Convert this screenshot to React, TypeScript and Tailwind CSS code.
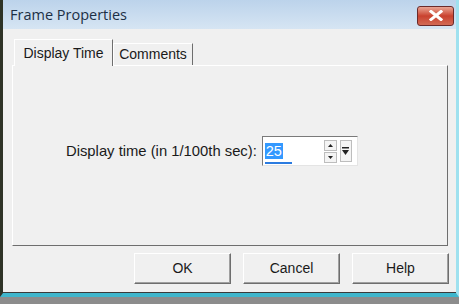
import React from 'react';

const ui = {fontFamily: '"Liberation Sans", Arial, sans-serif'};

function Btn({label}: {label: string}) {
  return (
    <button className="flex h-[31px] w-[97px] items-center justify-center border border-t-white border-l-white border-r-[#6e6e6e] border-b-[#6e6e6e] bg-[#f0f0f0] text-[14px] text-[#1a1a1a] shadow-[inset_-1px_-1px_0_#a0a0a0]">
      {label}
    </button>
  );
}

export default function App() {
  return (
    <div className="flex h-[304px] w-[459px] flex-col overflow-hidden bg-[#8c8c8c]" style={ui}>
      <div className="flex h-[297px] border-l-[3px] border-r-[3px] border-b-[4px] border-l-[#2e3326] border-r-[#9fe1ef] border-b-[#3fb6cc]">
        <div className="flex flex-1 flex-col border-b border-[#3a3a3a]">
          {/* title bar */}
          <div className="flex h-[29px] items-center justify-between bg-gradient-to-b from-[#bcd3eb] to-[#d6e5f3] pl-[7px] pr-[2px]">
            <span className="text-[14.5px] text-[#1c2f45]" style={{fontFamily: '"Open Sans", "Noto Sans", sans-serif'}}>
              Frame Properties
            </span>
            <div className="mt-[2px] flex h-[20px] w-[37px] items-center justify-center rounded-[3px] border border-[#6b2a2a] bg-gradient-to-b from-[#e8a393] via-[#c9412e] to-[#d26a55]">
              <svg width="14" height="11" viewBox="0 0 14 11">
                <path d="M2 1.5 L12 9.5 M12 1.5 L2 9.5" stroke="#fff" strokeWidth="3" strokeLinecap="square" />
              </svg>
            </div>
          </div>
          {/* body */}
          <div className="flex flex-1 flex-col bg-[#f0f0f0] pl-[9px] pr-[6px] pt-[10px]">
            <div className="flex items-end pl-[2px]">
              <div className="z-10 -mb-px flex h-[27px] w-[99px] items-center justify-center border border-b-0 border-t-white border-l-white border-r-[#6e6e6e] bg-[#f0f0f0] text-[14px] text-[#1a1a1a]">
                Display Time
              </div>
              <div className="flex h-[22px] w-[80px] items-center justify-center border border-b-0 border-t-white border-l-white border-r-[#6e6e6e] bg-[#f0f0f0] text-[14px] text-[#1a1a1a]">
                Comments
              </div>
            </div>
            <div className="flex h-[181px] w-[436px] items-center border border-t-white border-l-white border-r-[#6e6e6e] border-b-[#6e6e6e] pb-[9px] pl-[53px]">
              <span className="text-[14.8px] text-[#1a1a1a]">Display time (in 1/100th sec):</span>
              <div className="ml-[5px] flex h-[30px] w-[96px] items-center border border-t-[#7a7a7a] border-l-[#7a7a7a] border-r-[#e4e4e4] border-b-[#e4e4e4] bg-white pl-[2px] pr-[5px]">
                <div className="relative flex h-full flex-1 items-center">
                  <span className="bg-[#3399ff] px-[1px] text-[14.5px] leading-[16px] text-white">25</span>
                  <div className="absolute bottom-[1px] left-0 h-[2px] w-[27px] bg-[#2b7be0]" />
                </div>
                <div className="flex flex-col gap-[1px]">
                  <div className="flex h-[11px] w-[13px] items-center justify-center border border-[#bdbdbd] bg-[#f4f4f4]">
                    <svg width="5" height="3" viewBox="0 0 5 3"><path d="M2.5 0 L5 3 L0 3Z" fill="#222" /></svg>
                  </div>
                  <div className="flex h-[11px] w-[13px] items-center justify-center border border-[#bdbdbd] bg-[#f4f4f4]">
                    <svg width="5" height="3" viewBox="0 0 5 3"><path d="M0 0 L5 0 L2.5 3Z" fill="#222" /></svg>
                  </div>
                </div>
                <div className="ml-[3px] flex h-[22px] w-[12px] items-center justify-center border border-[#bdbdbd] bg-[#f4f4f4]">
                  <svg width="7" height="8" viewBox="0 0 7 8">
                    <rect x="0" y="0" width="7" height="1.5" fill="#222" />
                    <path d="M0 3 L7 3 L3.5 8Z" fill="#222" />
                  </svg>
                </div>
              </div>
            </div>
            <div className="mt-[7px] flex justify-end gap-[12px] pr-[1px]">
              <Btn label="OK" />
              <Btn label="Cancel" />
              <Btn label="Help" />
            </div>
          </div>
        </div>
      </div>
    </div>
  );
}
